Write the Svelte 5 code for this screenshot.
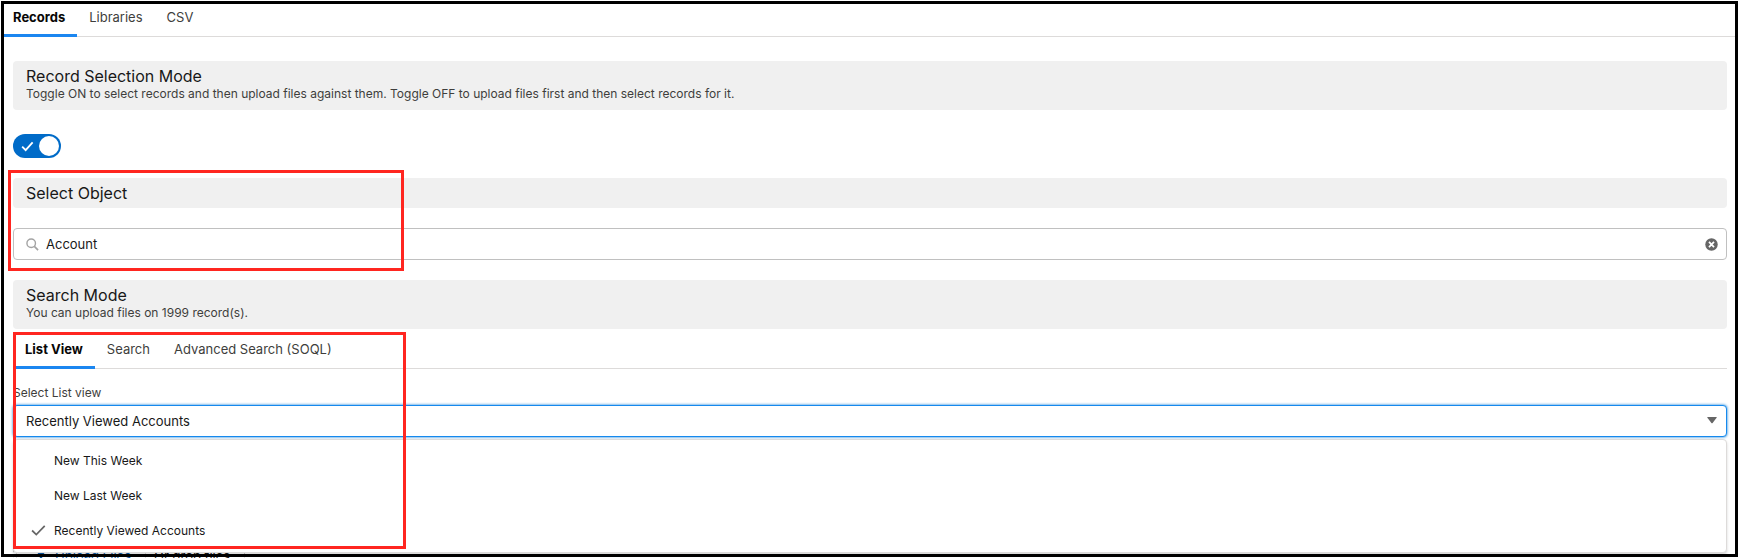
<script lang="ts">
	const mainTabs = ['Records', 'Libraries', 'CSV'];
	const searchTabs = ['List View', 'Search', 'Advanced Search (SOQL)'];
	const listViews = ['New This Week', 'New Last Week', 'Recently Viewed Accounts'];

	let activeMain = $state('Records');
	let activeSearch = $state('List View');
	let recordMode = $state(true);
	let objectName = $state('Account');
	let listView = $state('Recently Viewed Accounts');
	let menuOpen = $state(true);

	const recordLimit = 1999;

	const pickListView = (view: string) => {
		listView = view;
		menuOpen = false;
	};

	const handleMenuToggle = (event: MouseEvent) => {
		event.preventDefault();
		menuOpen = !menuOpen;
	};
</script>

<div class="page">
	<div class="tabs" role="tablist">
		{#each mainTabs as tab}
			<button
				class="tab"
				class:active={activeMain === tab}
				role="tab"
				aria-selected={activeMain === tab}
				onclick={() => (activeMain = tab)}>{tab}</button
			>
		{/each}
	</div>

	<main class="panel">
		<label class="section-header" for="record-mode">
			<span class="title">Record Selection Mode</span>
			<span class="subtitle">
				Toggle ON to select records and then upload files against them. Toggle OFF to upload files
				first and then select records for it.
			</span>
		</label>

		<div class="toggle">
			<input id="record-mode" type="checkbox" role="switch" bind:checked={recordMode} />
			<svg viewBox="0 0 14 12" fill="none" stroke="currentColor" stroke-width="2">
				<path d="M1.2 6.2 5 10 12.6 1.6" />
			</svg>
		</div>

		<label class="section-header object-header" for="object-name">
			<span class="title">Select Object</span>
		</label>

		<div class="search-box">
			<svg class="search-icon" viewBox="0 0 14 14" fill="none" stroke="currentColor">
				<circle cx="5.6" cy="5.6" r="4.6" stroke-width="1.5" />
				<path d="M9 9 13 13" stroke-width="1.8" />
			</svg>
			<input id="object-name" type="text" bind:value={objectName} />
			<button class="clear-btn" aria-label="Clear selection" onclick={() => (objectName = '')}>
				<svg viewBox="0 0 14 14">
					<circle cx="7" cy="7" r="6.7" fill="#666" />
					<path d="M4.3 4.3 9.7 9.7M9.7 4.3 4.3 9.7" stroke="#fff" stroke-width="1.9" />
				</svg>
			</button>
		</div>

		<div class="section-header">
			<span class="title">Search Mode</span>
			<span class="subtitle">You can upload files on {recordLimit} record(s).</span>
		</div>

		<div class="tabs search-tabs" role="tablist">
			{#each searchTabs as tab}
				<button
					class="tab"
					class:active={activeSearch === tab}
					role="tab"
					aria-selected={activeSearch === tab}
					onclick={() => (activeSearch = tab)}>{tab}</button
				>
			{/each}
		</div>

		<label class="field-label" for="list-view">Select List view</label>
		<div class="combobox">
			<select id="list-view" bind:value={listView} onmousedown={handleMenuToggle}>
				{#each listViews as view}
					<option value={view}>{view}</option>
				{/each}
			</select>
			<svg class="caret" viewBox="0 0 10 7" fill="currentColor">
				<path d="M.8 0h8.4q1 0 .4.8L5.6 6q-.6.7-1.2 0L.4.8Q-.2 0 .8 0z" />
			</svg>

			{#if menuOpen}
				<div class="menu" role="listbox" aria-label="List views">
					{#each listViews as view}
						<button
							class="menu-item"
							role="option"
							aria-selected={listView === view}
							onclick={() => pickListView(view)}
						>
							<span class="check">
								{#if listView === view}
									<svg viewBox="0 0 16 12" fill="none" stroke="currentColor" stroke-width="1.9">
										<path d="M1 6 5.6 10.4 14.8 1" />
									</svg>
								{/if}
							</span>
							{view}
						</button>
					{/each}
				</div>
			{/if}
		</div>

		<div class="uploader">
			<button class="upload-btn">
				<svg viewBox="0 0 12 12" fill="currentColor">
					<path d="M6 0 10 4.4H7.2V8H4.8V4.4H2zM0 8h1.6v2.4h8.8V8H12v4H0z" />
				</svg>
				Upload Files
			</button>
			<span class="drop-text">Or drop files</span>
		</div>
	</main>

	<div class="highlight object-highlight"></div>
	<div class="highlight list-highlight"></div>
	<div class="frame"></div>
</div>

<style>
	:global(body) {
		background: #fff;
	}

	.page {
		position: relative;
		box-sizing: border-box;
		height: 100vh;
		padding: 4px 3px 0 1px;
		overflow: hidden;
		font-family: Inter, 'Liberation Sans', sans-serif;
		font-size: 12px;
		color: #181818;
	}

	button,
	input,
	select {
		font: inherit;
		color: inherit;
	}

	.tabs {
		display: flex;
		border-bottom: 1px solid #dddbda;
	}

	.tab {
		height: 33px;
		margin-bottom: -1px;
		padding: 0 12px 4px;
		background: none;
		border: none;
		border-bottom: 3px solid transparent;
		font-size: 13px;
		line-height: 26px;
		color: #3e3e3c;
		cursor: pointer;
	}

	.tab.active {
		border-bottom-color: #1b86f0;
		font-weight: 700;
		color: #080707;
	}

	.panel {
		padding: 24px 8px 0 12px;
	}

	.section-header {
		display: flex;
		flex-direction: column;
		padding: 5px 13px 8px;
		background: #f0f0f0;
		border-radius: 4px;
	}

	.title {
		font-size: 16px;
		line-height: 20px;
	}

	.subtitle {
		line-height: 16px;
		color: #3e3e3c;
	}

	.toggle {
		position: relative;
		width: 48px;
		height: 24px;
		margin: 24px 0 20px;
	}

	.toggle input {
		display: block;
		width: 48px;
		height: 24px;
		margin: 0;
		appearance: none;
		background: #939393;
		border-radius: 12px;
		cursor: pointer;
	}

	.toggle input::before {
		content: '';
		position: absolute;
		top: 2px;
		left: 2px;
		width: 20px;
		height: 20px;
		background: #fff;
		border-radius: 50%;
	}

	.toggle input:checked {
		background: #006bc8;
	}

	.toggle input:checked::before {
		left: 26px;
	}

	.toggle svg {
		position: absolute;
		top: 7px;
		left: 8px;
		width: 13px;
		height: 11px;
		color: #fff;
		pointer-events: none;
	}

	.object-header {
		padding-bottom: 5px;
	}

	.search-box {
		display: flex;
		align-items: center;
		height: 30px;
		margin: 20px 0;
		padding: 0 8px 0 12px;
		background: #fff;
		border: 1px solid #c0c0c0;
		border-radius: 4px;
		font-size: 13px;
	}

	.search-icon {
		width: 13px;
		height: 13px;
		color: #a3a3a3;
	}

	.search-box input {
		flex: 1;
		min-width: 0;
		padding: 0 7px;
		background: none;
		border: none;
		outline: none;
	}

	.clear-btn {
		display: flex;
		padding: 0;
		background: none;
		border: none;
		cursor: pointer;
	}

	.clear-btn svg {
		width: 13px;
		height: 13px;
	}

	.search-tabs {
		margin-top: 7px;
	}

	.field-label {
		display: block;
		padding: 16px 0 4px;
		line-height: 16px;
		color: #3e3e3c;
	}

	.combobox {
		position: relative;
	}

	.combobox select {
		display: block;
		width: 100%;
		height: 32px;
		padding: 0 12px;
		appearance: none;
		background: #fff;
		border: 1px solid #1589ee;
		border-radius: 4px;
		outline: none;
		box-shadow: 0 0 3px #0176d3;
		font-size: 13px;
	}

	.caret {
		position: absolute;
		top: 12px;
		right: 10px;
		width: 10px;
		height: 7px;
		color: #666;
		pointer-events: none;
	}

	.menu {
		position: absolute;
		z-index: 1;
		top: 34px;
		left: 0;
		right: 0;
		padding: 3px 0 4px;
		background: #fff;
		border: 1px solid #dddbda;
		border-radius: 4px;
		box-shadow: 0 2px 3px rgba(0, 0, 0, 0.16);
	}

	.menu-item {
		display: flex;
		align-items: center;
		width: 100%;
		height: 35px;
		padding: 0 12px;
		background: none;
		border: none;
		text-align: left;
		cursor: pointer;
	}

	.check {
		display: flex;
		justify-content: center;
		width: 24px;
		margin-right: 4px;
	}

	.check svg {
		width: 15px;
		height: 11px;
		color: #666;
	}

	.uploader {
		display: inline-flex;
		align-items: center;
		height: 32px;
		margin-top: 102px;
		padding: 0 14px 0 2px;
		border: 1px dashed #c9c7c5;
		border-radius: 4px;
		font-size: 13px;
	}

	.upload-btn {
		display: flex;
		align-items: center;
		gap: 8px;
		height: 30px;
		padding: 0 14px 0 18px;
		background: #fff;
		border: 1px solid #dddbda;
		border-radius: 4px;
		color: #0b5cab;
	}

	.upload-btn svg {
		width: 12px;
		height: 12px;
	}

	.drop-text {
		padding-left: 8px;
	}

	.highlight {
		position: absolute;
		z-index: 2;
		box-sizing: border-box;
		border: 3px solid #ff2620;
		pointer-events: none;
	}

	.object-highlight {
		top: 170px;
		left: 8px;
		width: 396px;
		height: 101px;
	}

	.list-highlight {
		top: 332px;
		left: 13px;
		width: 393px;
		height: 217px;
	}

	.frame {
		position: absolute;
		z-index: 3;
		inset: 1px 0 1px 1px;
		border: 3px solid #000;
		pointer-events: none;
	}
</style>
